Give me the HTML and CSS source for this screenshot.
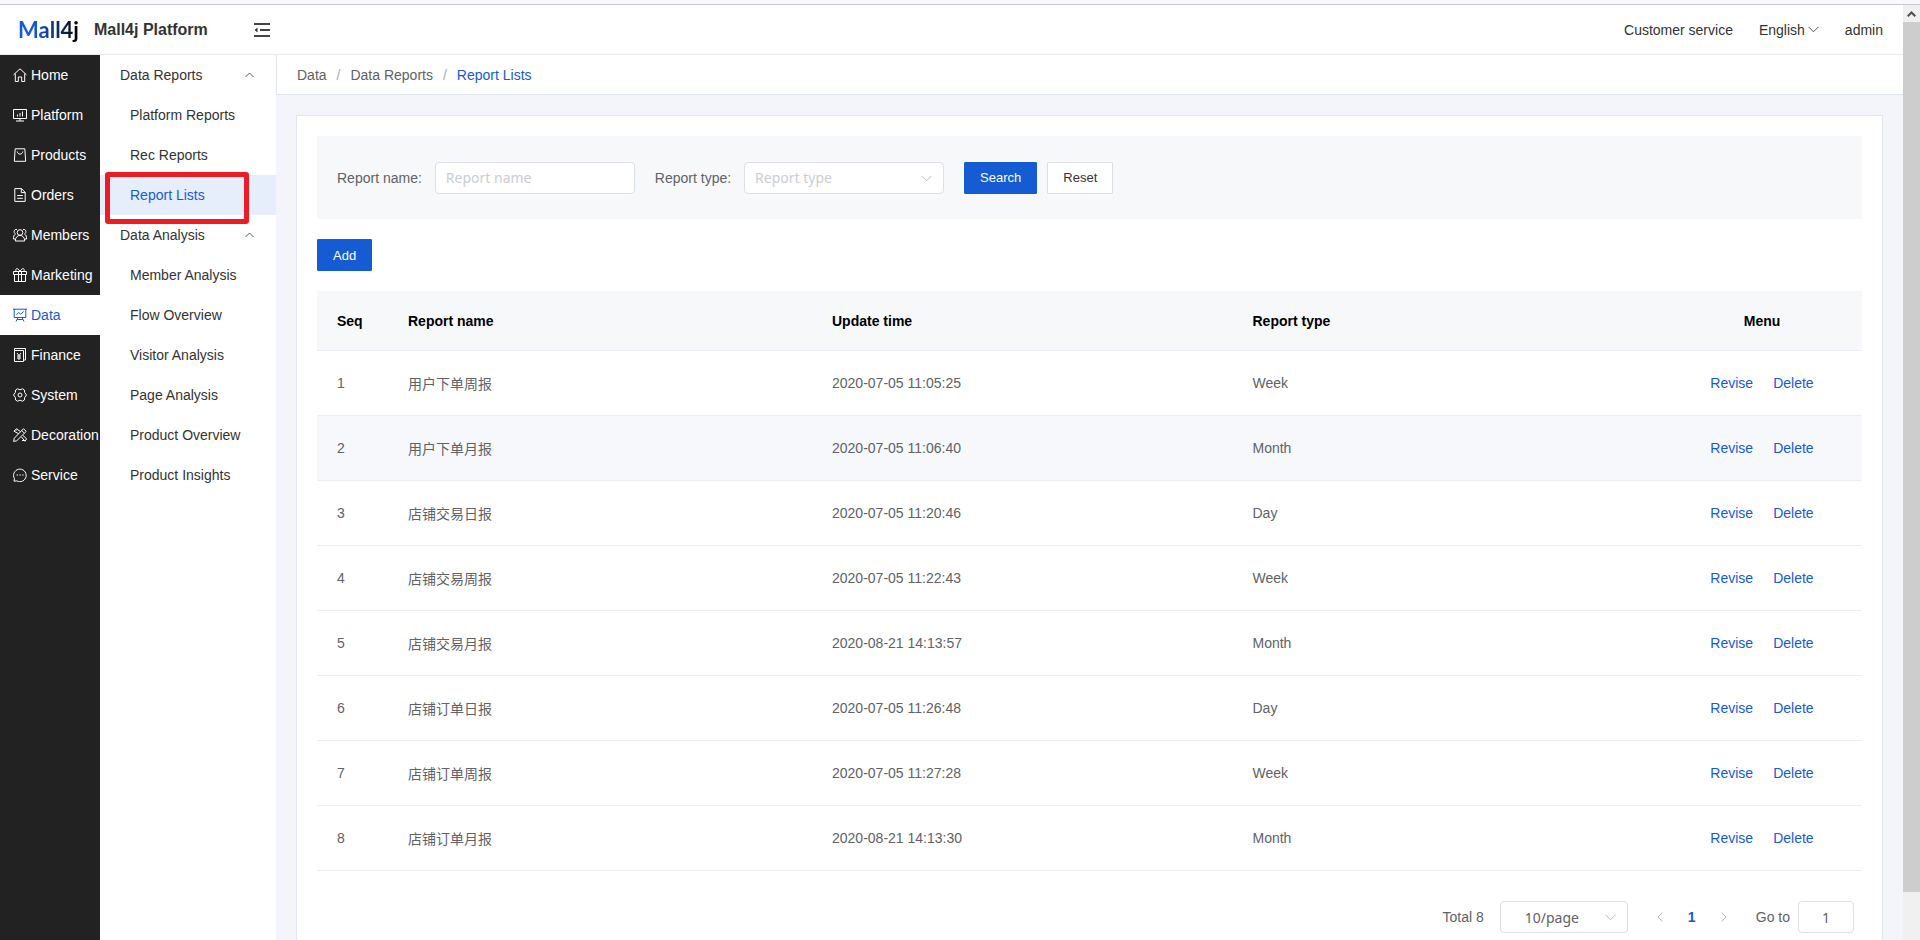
FILE: index.html
```html
<!DOCTYPE html>
<html lang="en">
<head>
    <meta charset="UTF-8">
    <meta name="viewport" content="width=device-width, initial-scale=1.0">
    <title>Mall4j Platform</title>
    <link rel="stylesheet" href="styles.css">
</head>
<body>
    <div class="window-edge"></div>
    <div class="window">
        <div class="app">
            <header class="header">
                <span class="logo">Mall4j</span>
                <h1 class="title">Mall4j Platform</h1>
                <button class="fold" type="button" aria-label="Fold menu">
                    <svg width="16" height="14" viewBox="0 0 16 14"><path d="M0 1h16M6 7h10M0 13h16" stroke="#444" stroke-width="2" fill="none"/><path d="M3.500 4.500v5L.5 7z" fill="#333"/></svg>
                </button>
                <nav class="header-right">
                    <a href="#">Customer service</a>
                    <button class="lang" type="button">English
                        <svg width="11" height="7" viewBox="0 0 11 7"><path d="M.5 .8l5 5 5-5" stroke="#555" fill="none"/></svg>
                    </button>
                    <a href="#">admin</a>
                </nav>
            </header>

            <div class="main">
                <nav class="sidebar">
                    <a href="#"><svg viewBox="0 0 14 14"><path d="M.5 6.800L7 .8l6.500 6M2.300 5.500v8h3v-4.500h3.400v4.500h3v-8"/></svg>Home</a>
                    <a href="#"><svg viewBox="0 0 14 14"><path d="M.5 1.500h13v9H.5zM7 10.500v2.500M3 13h8M4.500 6.500v2M7 5v3.500M9.500 3.500v5"/></svg>Platform</a>
                    <a href="#"><svg viewBox="0 0 14 14"><path d="M2.200 .8h9.600l.9 12.500H1.300zM4.200 3.500c.5 3.500 5.100 3.500 5.600 0"/></svg>Products</a>
                    <a href="#"><svg viewBox="0 0 14 14"><path d="M1.800 .6h6.700l3.700 3.800v9H1.800zM8.300 .6v4h3.900M4.200 7.500h5.600M4.200 10.300h5.600"/></svg>Orders</a>
                    <a href="#"><svg viewBox="0 0 14 14"><circle cx="7" cy="4.500" r="2.800"/><path d="M2.300 13c0-7.500 9.400-7.500 9.400 0zM4 1.500C1 .7 0 4.700 2.500 6 .8 7 .4 8.500 .4 11h1.800M10 1.500c3-.8 4 3.200 1.500 4.500 1.700 1 2.100 2.500 2.100 5h-1.800"/></svg>Members</a>
                    <a href="#"><svg viewBox="0 0 14 14"><path d="M.5 3.500h13v3H.5zM1.500 6.500v7h11v-7M5.500 3.500v10M8.500 3.500v10M7 3.500C5-.5 2-.2 3 3.500M7 3.500c2-4 5-3.700 4 0"/></svg>Marketing</a>
                    <a href="#" class="active"><svg viewBox="0 0 14 14"><path d="M0 1.200h14M1.200 1.200v8.300h11.600V1.200M3.300 6.800l2.400-2.200 2 1.500 3-2.600M5 9.500l-2 4M9 9.500l2 4M4.200 11.500h5.600"/></svg>Data</a>
                    <a href="#"><svg viewBox="0 0 14 14"><path d="M1.500 2.500h9v11h-9zM1.500 2.500v-2h11v11.500h-2M4 5l2 2.500L8 5M6 7.500V12M4 8h4M4 10h4"/></svg>Finance</a>
                    <a href="#"><svg viewBox="0 0 14 14"><circle cx="7" cy="7" r="2"/><path d="M4.500 .8l2.500 1 2.500-1 1.900 1.200.2 2.400L13.500 7l-1.900 2.600-.2 2.400-1.900 1.200-2.500-1-2.500 1L2.600 12l-.2-2.400L.5 7l1.900-2.600.2-2.400z"/></svg>System</a>
                    <a href="#"><svg viewBox="0 0 14 14"><path d="M10.500 .7l2.700 2.700L3.700 12.800l-3.100 .6.700-3.200zM8.700 2.500l2.700 2.700M5.500 5.700L1 3.200 3.500 .7l4 3M8.500 9l3.500 4.300 1.600-2.500L10 7.500M2.800 2.800l1.500-1.500M9 12.500h2.500"/></svg>Decoration</a>
                    <a href="#"><svg viewBox="0 0 14 14"><path d="M1 13.200l.5-2.500a6.300 6.300 0 1 1 2.300 2.200zM3.600 7h1.400M6.400 7h1.400M9.200 7h1.400"/></svg>Service</a>
                </nav>

                <nav class="submenu">
                    <button class="group" type="button">Data Reports
                        <svg width="9" height="6" viewBox="0 0 9 6"><path d="M.5 5l4-4 4 4" stroke="#555" fill="none"/></svg>
                    </button>
                    <a href="#">Platform Reports</a>
                    <a href="#">Rec Reports</a>
                    <a href="#" class="current">Report Lists</a>
                    <button class="group" type="button">Data Analysis
                        <svg width="9" height="6" viewBox="0 0 9 6"><path d="M.5 5l4-4 4 4" stroke="#555" fill="none"/></svg>
                    </button>
                    <a href="#">Member Analysis</a>
                    <a href="#">Flow Overview</a>
                    <a href="#">Visitor Analysis</a>
                    <a href="#">Page Analysis</a>
                    <a href="#">Product Overview</a>
                    <a href="#">Product Insights</a>
                </nav>

                <main class="content">
                    <nav class="breadcrumb">
                        <a href="#">Data</a>
                        <span>/</span>
                        <a href="#">Data Reports</a>
                        <span>/</span>
                        <a href="#" class="here">Report Lists</a>
                    </nav>

                    <section class="card">
                        <form class="search">
                            <div class="field">
                                <label for="report-name">Report name:</label>
                                <input id="report-name" class="control" type="text" placeholder="Report name">
                            </div>
                            <div class="field">
                                <label for="report-type">Report type:</label>
                                <div class="select">
                                    <select id="report-type" class="control empty">
                                        <option>Report type</option>
                                        <option>Day</option>
                                        <option>Week</option>
                                        <option>Month</option>
                                    </select>
                                    <svg width="11" height="7" viewBox="0 0 11 7"><path d="M.5 .8l5 5 5-5" stroke="#b4b8c0" fill="none"/></svg>
                                </div>
                            </div>
                            <div class="buttons">
                                <button class="btn primary" type="button">Search</button>
                                <button class="btn" type="reset">Reset</button>
                            </div>
                        </form>

                        <button class="btn primary" type="button">Add</button>

                        <table class="reports">
                            <thead>
                                <tr>
                                    <th class="col-seq">Seq</th>
                                    <th class="col-name">Report name</th>
                                    <th>Update time</th>
                                    <th>Report type</th>
                                    <th class="col-menu">Menu</th>
                                </tr>
                            </thead>
                            <tbody>
                                <tr>
                                    <td>1</td><td>用户下单周报</td><td>2020-07-05 11:05:25</td><td>Week</td>
                                    <td><a href="#">Revise</a><a href="#">Delete</a></td>
                                </tr>
                                <tr class="hover">
                                    <td>2</td><td>用户下单月报</td><td>2020-07-05 11:06:40</td><td>Month</td>
                                    <td><a href="#">Revise</a><a href="#">Delete</a></td>
                                </tr>
                                <tr>
                                    <td>3</td><td>店铺交易日报</td><td>2020-07-05 11:20:46</td><td>Day</td>
                                    <td><a href="#">Revise</a><a href="#">Delete</a></td>
                                </tr>
                                <tr>
                                    <td>4</td><td>店铺交易周报</td><td>2020-07-05 11:22:43</td><td>Week</td>
                                    <td><a href="#">Revise</a><a href="#">Delete</a></td>
                                </tr>
                                <tr>
                                    <td>5</td><td>店铺交易月报</td><td>2020-08-21 14:13:57</td><td>Month</td>
                                    <td><a href="#">Revise</a><a href="#">Delete</a></td>
                                </tr>
                                <tr>
                                    <td>6</td><td>店铺订单日报</td><td>2020-07-05 11:26:48</td><td>Day</td>
                                    <td><a href="#">Revise</a><a href="#">Delete</a></td>
                                </tr>
                                <tr>
                                    <td>7</td><td>店铺订单周报</td><td>2020-07-05 11:27:28</td><td>Week</td>
                                    <td><a href="#">Revise</a><a href="#">Delete</a></td>
                                </tr>
                                <tr>
                                    <td>8</td><td>店铺订单月报</td><td>2020-08-21 14:13:30</td><td>Month</td>
                                    <td><a href="#">Revise</a><a href="#">Delete</a></td>
                                </tr>
                            </tbody>
                        </table>

                        <div class="pagination">
                            <span>Total 8</span>
                            <div class="select">
                                <select class="control size" aria-label="Page size">
                                    <option>10/page</option>
                                    <option>20/page</option>
                                </select>
                                <svg width="11" height="7" viewBox="0 0 11 7"><path d="M.5 .8l5 5 5-5" stroke="#b4b8c0" fill="none"/></svg>
                            </div>
                            <div class="pager">
                                <button type="button" aria-label="Previous page"><svg width="6" height="10" viewBox="0 0 6 10"><path d="M5.300 .8L1 5l4.300 4.200" stroke="#b4b8c0" fill="none"/></svg></button>
                                <button type="button" class="page">1</button>
                                <button type="button" aria-label="Next page"><svg width="6" height="10" viewBox="0 0 6 10"><path d="M.7 .8L5 5 .7 9.200" stroke="#b4b8c0" fill="none"/></svg></button>
                            </div>
                            <div class="jump">
                                <label for="goto">Go to</label>
                                <input id="goto" class="control" type="text" value="1">
                            </div>
                        </div>
                    </section>
                </main>
            </div>
        </div>

        <div class="scrollbar">
            <div class="scroll-up"><svg width="9" height="6" viewBox="0 0 9 6"><path d="M.7 5.300l3.800-3.800 3.800 3.800" stroke="#505050" stroke-width="2" fill="none"/></svg></div>
            <div class="thumb"></div>
        </div>
    </div>
</body>
</html>
```

FILE: styles.css
```css
*,
*::after{
    box-sizing: border-box;
}

body{
    margin: 0;
    height: 100vh;
    display: flex;
    flex-direction: column;
    overflow: hidden;
    background-color: #fff;
    color: #333;
    font-family: "Liberation Sans", "Noto Sans CJK SC", Arial, sans-serif;
    font-size: 14px;
}

a{
    color: inherit;
    text-decoration: none;
}

button{
    padding: 0;
    border: none;
    background: none;
    color: inherit;
    font: inherit;
    cursor: pointer;
}

.window-edge{
    flex: none;
    height: 5px;
    background-color: #f7f8fb;
    border-bottom: 1px solid #c8c9cc;
}

.window{
    flex: 1;
    display: flex;
    min-height: 0;
}

.app{
    flex: 1;
    display: flex;
    flex-direction: column;
    min-width: 0;
}

/* header */

.header{
    flex: none;
    height: 50px;
    display: flex;
    align-items: center;
    padding: 0 20px 0 18px;
    border-bottom: 1px solid #e9ebee;
}

.logo{
    width: 76px;
    font-family: Lato, sans-serif;
    font-size: 22px;
    font-weight: bold;
    line-height: 28px;
    background: linear-gradient(90deg, #155bd4 0, #155bd4 16px, #0a1a3c 50px, #000 60px);
    -webkit-background-clip: text;
    background-clip: text;
    color: transparent;
}

.title{
    margin: 0;
    font-size: 16px;
}

.fold{
    display: flex;
    margin-left: 46px;
}

.header-right{
    display: flex;
    align-items: center;
    gap: 26px;
    margin-left: auto;
}

.lang{
    display: flex;
    align-items: center;
    gap: 3px;
}

.main{
    flex: 1;
    display: flex;
    min-height: 0;
}

/* menus */

.sidebar{
    flex: none;
    width: 100px;
    background-color: #222;
    color: #fff;
    overflow: hidden;
}

.sidebar a{
    display: flex;
    align-items: center;
    gap: 4px;
    height: 40px;
    padding-left: 13px;
}

.sidebar svg{
    flex: none;
    width: 14px;
    height: 14px;
    fill: none;
    stroke: currentColor;
}

.sidebar .active{
    background-color: #fff;
    color: #155bd4;
}

.submenu{
    flex: none;
    width: 176px;
}

.submenu a,
.group{
    display: flex;
    align-items: center;
    width: 100%;
    height: 40px;
    padding-left: 30px;
}

.submenu .group{
    justify-content: space-between;
    padding: 0 22px 0 20px;
}

.submenu .current{
    position: relative;
    background-color: #e6edfb;
    color: #155bd4;
}

/* marker frame round the current entry */
.current::after{
    content: "";
    position: absolute;
    left: 5px;
    top: -3px;
    width: 144px;
    height: 52px;
    border: 5px solid #ed1c24;
    border-radius: 3px;
}

/* content */

.content{
    flex: 1;
    min-width: 0;
    background-color: #f4f5fa;
    overflow: hidden;
}

.breadcrumb{
    display: flex;
    align-items: center;
    gap: 10px;
    height: 40px;
    padding-left: 20px;
    background-color: #fff;
    border-left: 1px solid #dfe4ec;
    border-bottom: 1px solid #dfe4ec;
    color: #606266;
}

.breadcrumb span{
    color: #a8abb2;
}

.breadcrumb .here{
    color: #155bd4;
}

.card{
    margin: 20px;
    padding: 20px;
    background-color: #fff;
    border: 1px solid #e1e5ed;
    color: #606266;
}

.search{
    display: flex;
    align-items: center;
    gap: 20px;
    height: 83px;
    margin-bottom: 20px;
    padding: 0 20px;
    background-color: #f7f8fa;
}

.field{
    display: flex;
    align-items: center;
    gap: 13px;
}

.control{
    width: 200px;
    height: 32px;
    padding: 0 10px;
    background-color: #fff;
    border: 1px solid #dcdfe6;
    border-radius: 4px;
    color: #606266;
    font-family: "Noto Sans", sans-serif;
    font-size: 14px;
    appearance: none;
}

.control::placeholder,
.control.empty{
    color: #cbcdd3;
}

.select{
    position: relative;
    display: flex;
}

.select svg{
    position: absolute;
    right: 12px;
    top: 13px;
    pointer-events: none;
}

.buttons{
    display: flex;
    gap: 10px;
}

.btn{
    height: 32px;
    padding: 0 15px;
    background-color: #fff;
    border: 1px solid #dcdfe6;
    border-radius: 1px;
    color: #333;
    font-size: 13px;
}

.btn.primary{
    background-color: #155bd4;
    border-color: #155bd4;
    color: #fff;
}

/* table */

.reports{
    width: 100%;
    margin-top: 20px;
    table-layout: fixed;
    border-collapse: separate;
    border-spacing: 0;
}

.reports th,
.reports td{
    height: 65px;
    padding: 0 11px;
    border-bottom: 1px solid #ebeef5;
    text-align: left;
}

.reports th{
    height: 60px;
    background-color: #f7f8fa;
    color: #000;
}

.reports th:first-child,
.reports td:first-child{
    padding-left: 20px;
}

.reports th:last-child,
.reports td:last-child{
    text-align: center;
}

.reports .col-seq{
    width: 80px;
}

.reports .col-name{
    width: 424px;
}

.reports .col-menu{
    width: 200px;
}

.reports .hover{
    background-color: #f6f8fc;
}

.reports a{
    color: #155bd4;
}

.reports a + a{
    margin-left: 20px;
}

/* pagination */

.pagination{
    display: flex;
    align-items: center;
    justify-content: flex-end;
    gap: 16px;
    margin-top: 30px;
    padding: 0 8px 20px 0;
}

.control.size{
    width: 128px;
    padding-left: 24px;
}

.pager{
    display: flex;
}

.pager button{
    display: flex;
    align-items: center;
    justify-content: center;
    width: 32px;
    height: 32px;
}

.pager .page{
    color: #155bd4;
    font-weight: bold;
}

.jump{
    display: flex;
    align-items: center;
    gap: 8px;
}

.jump .control{
    width: 56px;
    text-align: center;
}

/* scrollbar */

.scrollbar{
    flex: none;
    display: flex;
    flex-direction: column;
    width: 17px;
    background-color: #f0f0f0;
}

.scroll-up{
    display: flex;
    align-items: center;
    justify-content: center;
    height: 17px;
}

.thumb{
    height: 93%;
    background-color: #cdcdcd;
}
```
